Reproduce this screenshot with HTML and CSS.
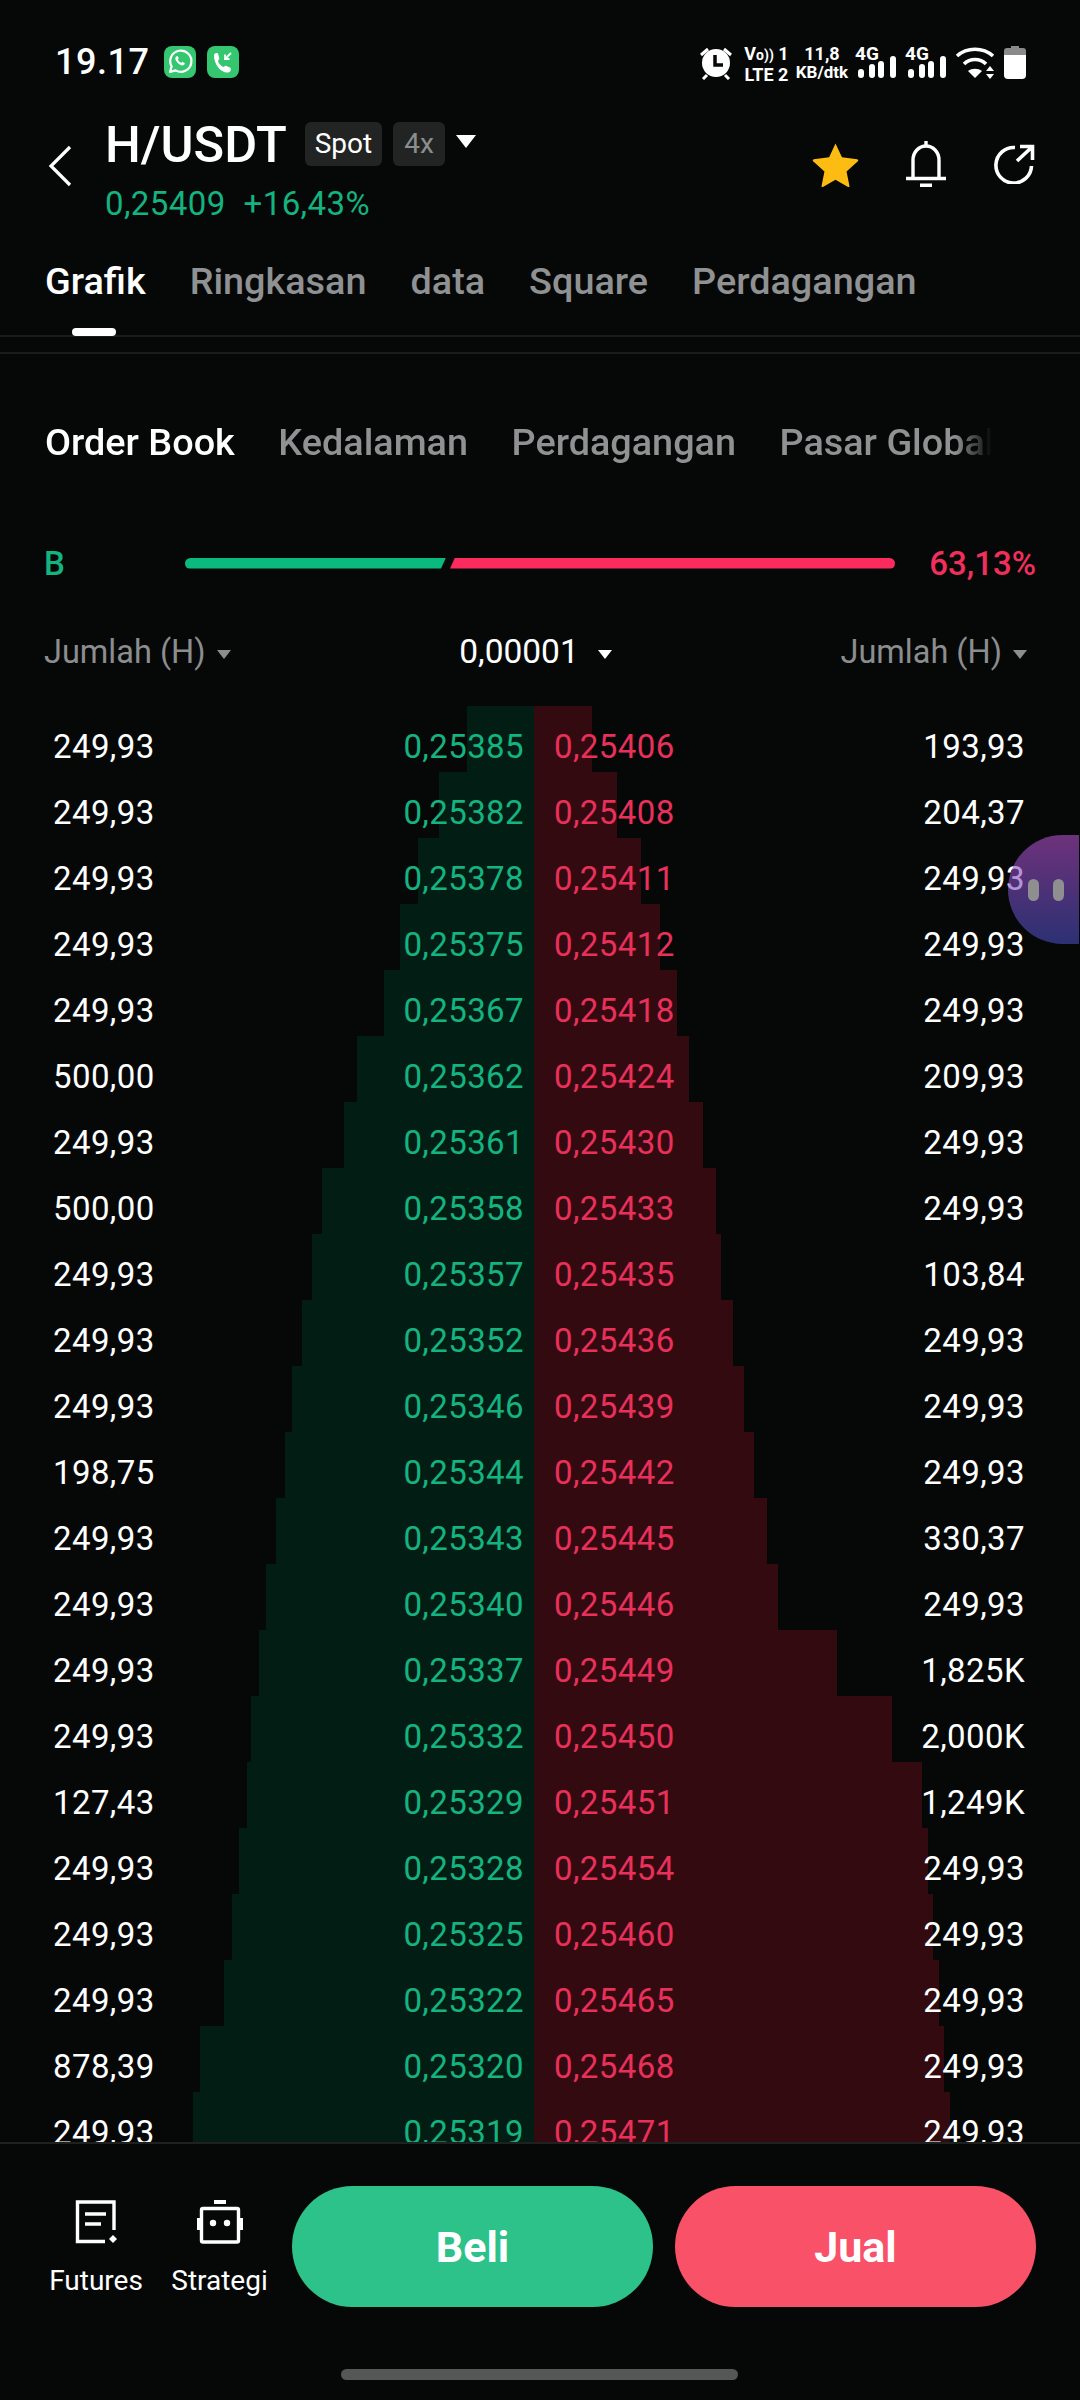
FILE: index.html
```html
<!DOCTYPE html>
<html lang="en">
<head>
  <meta charset="UTF-8">
  <meta name="viewport" content="width=device-width, initial-scale=1.0">
  <title>H/USDT</title>
  <link rel="stylesheet" href="styles.css">
</head>
<body>
  <!-- Status bar -->
  <div class="status-bar">
    <div class="status-left">
      <span class="clock">19.17</span>
      <svg class="app-icon" viewBox="0 0 32 32"><rect width="32" height="32" rx="8" fill="#35c670"/><path d="M6 26l1.6-5.6A10.6 10.6 0 1 1 11.6 24.4z" fill="none" stroke="#fff" stroke-width="2.2" stroke-linejoin="round"/><path d="M12.2 10.4c-1.4 1-1.2 3 .4 5.2s3.6 3.8 5.6 3.8c1.5 0 2.8-1 2.6-2.2l-2.6-1.4-1.2 1.1c-1.3-.6-2.6-1.9-3.2-3.3l1-1.1-1.1-2.5z" fill="#fff"/></svg>
      <svg class="app-icon" viewBox="0 0 32 32"><rect width="32" height="32" rx="8" fill="#35c670"/><path d="M7 9c0-1.500 3-2.500 4-1.500l1.400 5c.2 1-1.400 1.800-1.400 2.600.6 2.600 3 5 5.400 5.800.8 0 1.600-1.400 2.600-1.200l4.400 2c1 1 .4 3.800-1.400 4.600C15 28 6.600 19 7 9z" fill="#fff"/><path d="M24 7l-6 6M18 8.500V13h4.500" fill="none" stroke="#fff" stroke-width="1.800"/></svg>
    </div>
    <div class="status-right">
      <svg class="st-alarm" viewBox="0 0 32 34"><path d="M1 9l7-6M31 9l-7-6M3 33l4-4M29 33l-4-4" stroke="#fff" stroke-width="3" fill="none"/><circle cx="16" cy="17" r="14" fill="#fff"/><path d="M15 9v10h8" stroke="#060808" stroke-width="3.500" fill="none"/></svg>
      <div class="st-two st-vol"><span>V<small>o))</small> 1</span><span>LTE 2</span></div>
      <div class="st-two st-speed"><span>11,8</span><span class="st-unit">KB/dtk</span></div>
      <div class="st-signal"><span class="st-4g">4G</span><svg viewBox="0 0 41 34"><rect x="3" y="23" width="6" height="9" rx="3" fill="#fff"/><rect x="14" y="18" width="6" height="14" rx="3" fill="#fff"/><rect x="23" y="15" width="6" height="17" rx="3" fill="#fff"/><rect x="35" y="10" width="6" height="22" rx="3" fill="#fff"/></svg></div>
      <div class="st-signal"><span class="st-4g">4G</span><svg viewBox="0 0 41 34"><rect x="3" y="23" width="6" height="9" rx="3" fill="#fff"/><rect x="14" y="18" width="6" height="14" rx="3" fill="#fff"/><rect x="23" y="15" width="6" height="17" rx="3" fill="#fff"/><rect x="35" y="10" width="6" height="22" rx="3" fill="#fff"/></svg></div>
      <svg class="st-wifi" viewBox="0 0 40 34"><path d="M2 10C12 1 28 1 38 10" fill="none" stroke="#fff" stroke-width="3.600"/><path d="M9 18C15 12 25 12 31 18" fill="none" stroke="#fff" stroke-width="3.600"/><path d="M13 25c4-3 10-3 14 0l-7 7z" fill="#fff"/><path d="M35 20l4 5h-8zM35 33l-4-5h8z" fill="#fff"/></svg>
      <svg class="st-battery" viewBox="0 0 22 33"><path d="M0 9V5q0-3 3-3h4V0h8v2h4q3 0 3 3v4z" fill="#8a8a8a"/><path d="M0 9h22v20q0 4-4 4H4q-4 0-4-4z" fill="#fff"/></svg>
    </div>
  </div>

  <!-- Pair header -->
  <div class="pair-header">
    <svg class="back-icon" viewBox="0 0 24 42"><path d="M22 2L3 21l19 19" fill="none" stroke="#fff" stroke-width="3.200"/></svg>
    <div class="pair-info">
      <div class="pair-title">
        <span class="pair-name">H/USDT</span>
        <span class="badge">Spot</span>
        <span class="badge badge-dim">4x</span>
        <span class="caret caret-big"></span>
      </div>
      <div class="pair-price"><span>0,25409</span><span>+16,43%</span></div>
    </div>
    <div class="header-actions">
      <svg class="act-star" viewBox="0 0 48 46"><path d="M24 1.500l6.600 14.200 15.600 1.900c1 .2 1.400 1.300.7 2L35.300 30.200l3 15c.1.700-.6 1.300-1.300.9L24 38.500l-13 7.600c-.7.400-1.400-.2-1.300-.9l3-15L1.100 19.600c-.7-.7-.3-1.800.7-2l15.700-1.900z" fill="#fdbc11"/></svg>
      <svg class="act-bell" viewBox="0 0 40 46"><path d="M20 0v5M7 37V19C7 11 13 5 20 5s13 6 13 14v18M0 37.500h40" fill="none" stroke="#fff" stroke-width="3.400"/><rect x="14" y="42.500" width="12" height="3.500" fill="#fff"/></svg>
      <svg class="act-share" viewBox="0 0 42 40"><path d="M22 3.500A17.800 17.800 0 1 0 38.500 22" fill="none" stroke="#fff" stroke-width="3.600"/><path d="M27 2.500h12.500V16M39 3L24 17" fill="none" stroke="#fff" stroke-width="3.600"/></svg>
    </div>
  </div>

  <!-- Main tabs -->
  <div class="main-tabs">
    <span class="tab tab-active">Grafik</span>
    <span class="tab">Ringkasan</span>
    <span class="tab">data</span>
    <span class="tab">Square</span>
    <span class="tab">Perdagangan</span>
  </div>
  <div class="tab-gap"></div>

  <!-- Sub tabs -->
  <div class="sub-tabs">
    <span class="tab tab-active">Order Book</span>
    <span class="tab">Kedalaman</span>
    <span class="tab">Perdagangan</span>
    <span class="tab">Pasar Global</span>
  </div>

  <!-- Buy and sell ratio -->
  <div class="ratio-row">
    <span class="ratio-label">B</span>
    <div class="ratio-bar">
      <div class="ratio-buy"></div>
      <div class="ratio-sell"></div>
    </div>
    <span class="ratio-value">63,13%</span>
  </div>

  <!-- Column heads -->
  <div class="book-head">
    <span class="head-cell">Jumlah (H)<i class="caret"></i></span>
    <span class="head-cell head-mid">0,00001<i class="caret caret-white"></i></span>
    <span class="head-cell">Jumlah (H)<i class="caret"></i></span>
  </div>

  <!-- Order book -->
  <div class="book">
    <div class="row"><div class="bid"><i class="depth" style="width:67px"></i><span>249,93</span><span class="price">0,25385</span></div><div class="ask"><i class="depth" style="width:58px"></i><span class="price">0,25406</span><span>193,93</span></div></div>
    <div class="row"><div class="bid"><i class="depth" style="width:95px"></i><span>249,93</span><span class="price">0,25382</span></div><div class="ask"><i class="depth" style="width:83px"></i><span class="price">0,25408</span><span>204,37</span></div></div>
    <div class="row"><div class="bid"><i class="depth" style="width:116px"></i><span>249,93</span><span class="price">0,25378</span></div><div class="ask"><i class="depth" style="width:107px"></i><span class="price">0,25411</span><span>249,93</span></div></div>
    <div class="row"><div class="bid"><i class="depth" style="width:134px"></i><span>249,93</span><span class="price">0,25375</span></div><div class="ask"><i class="depth" style="width:126px"></i><span class="price">0,25412</span><span>249,93</span></div></div>
    <div class="row"><div class="bid"><i class="depth" style="width:150px"></i><span>249,93</span><span class="price">0,25367</span></div><div class="ask"><i class="depth" style="width:143px"></i><span class="price">0,25418</span><span>249,93</span></div></div>
    <div class="row"><div class="bid"><i class="depth" style="width:177px"></i><span>500,00</span><span class="price">0,25362</span></div><div class="ask"><i class="depth" style="width:155px"></i><span class="price">0,25424</span><span>209,93</span></div></div>
    <div class="row"><div class="bid"><i class="depth" style="width:190px"></i><span>249,93</span><span class="price">0,25361</span></div><div class="ask"><i class="depth" style="width:169px"></i><span class="price">0,25430</span><span>249,93</span></div></div>
    <div class="row"><div class="bid"><i class="depth" style="width:212px"></i><span>500,00</span><span class="price">0,25358</span></div><div class="ask"><i class="depth" style="width:182px"></i><span class="price">0,25433</span><span>249,93</span></div></div>
    <div class="row"><div class="bid"><i class="depth" style="width:222px"></i><span>249,93</span><span class="price">0,25357</span></div><div class="ask"><i class="depth" style="width:187px"></i><span class="price">0,25435</span><span>103,84</span></div></div>
    <div class="row"><div class="bid"><i class="depth" style="width:232px"></i><span>249,93</span><span class="price">0,25352</span></div><div class="ask"><i class="depth" style="width:199px"></i><span class="price">0,25436</span><span>249,93</span></div></div>
    <div class="row"><div class="bid"><i class="depth" style="width:242px"></i><span>249,93</span><span class="price">0,25346</span></div><div class="ask"><i class="depth" style="width:210px"></i><span class="price">0,25439</span><span>249,93</span></div></div>
    <div class="row"><div class="bid"><i class="depth" style="width:249px"></i><span>198,75</span><span class="price">0,25344</span></div><div class="ask"><i class="depth" style="width:220px"></i><span class="price">0,25442</span><span>249,93</span></div></div>
    <div class="row"><div class="bid"><i class="depth" style="width:258px"></i><span>249,93</span><span class="price">0,25343</span></div><div class="ask"><i class="depth" style="width:233px"></i><span class="price">0,25445</span><span>330,37</span></div></div>
    <div class="row"><div class="bid"><i class="depth" style="width:268px"></i><span>249,93</span><span class="price">0,25340</span></div><div class="ask"><i class="depth" style="width:244px"></i><span class="price">0,25446</span><span>249,93</span></div></div>
    <div class="row"><div class="bid"><i class="depth" style="width:275px"></i><span>249,93</span><span class="price">0,25337</span></div><div class="ask"><i class="depth" style="width:303px"></i><span class="price">0,25449</span><span>1,825K</span></div></div>
    <div class="row"><div class="bid"><i class="depth" style="width:283px"></i><span>249,93</span><span class="price">0,25332</span></div><div class="ask"><i class="depth" style="width:358px"></i><span class="price">0,25450</span><span>2,000K</span></div></div>
    <div class="row"><div class="bid"><i class="depth" style="width:287px"></i><span>127,43</span><span class="price">0,25329</span></div><div class="ask"><i class="depth" style="width:388px"></i><span class="price">0,25451</span><span>1,249K</span></div></div>
    <div class="row"><div class="bid"><i class="depth" style="width:295px"></i><span>249,93</span><span class="price">0,25328</span></div><div class="ask"><i class="depth" style="width:394px"></i><span class="price">0,25454</span><span>249,93</span></div></div>
    <div class="row"><div class="bid"><i class="depth" style="width:302px"></i><span>249,93</span><span class="price">0,25325</span></div><div class="ask"><i class="depth" style="width:399px"></i><span class="price">0,25460</span><span>249,93</span></div></div>
    <div class="row"><div class="bid"><i class="depth" style="width:310px"></i><span>249,93</span><span class="price">0,25322</span></div><div class="ask"><i class="depth" style="width:405px"></i><span class="price">0,25465</span><span>249,93</span></div></div>
    <div class="row"><div class="bid"><i class="depth" style="width:334px"></i><span>878,39</span><span class="price">0,25320</span></div><div class="ask"><i class="depth" style="width:410px"></i><span class="price">0,25468</span><span>249,93</span></div></div>
    <div class="row"><div class="bid"><i class="depth" style="width:341px"></i><span>249,93</span><span class="price">0,25319</span></div><div class="ask"><i class="depth" style="width:416px"></i><span class="price">0,25471</span><span>249,93</span></div></div>
  </div>

  <!-- Bottom actions -->
  <div class="bottom-bar">
    <div class="nav-item nav-futures">
      <svg class="nav-icon" viewBox="0 0 46 44"><path d="M32 41.500H4.500V2H41v28M12 14h21M12 24h16" fill="none" stroke="#fff" stroke-width="3.400"/><path d="M40 35l4 4-4 4-4-4z" fill="#fff"/></svg>
      <span>Futures</span>
    </div>
    <div class="nav-item nav-strategy">
      <svg class="nav-icon" viewBox="0 0 46 44"><rect x="17" y="0" width="12" height="4" fill="#fff"/><rect x="4.500" y="8.500" width="37" height="33.500" rx="1.500" fill="none" stroke="#fff" stroke-width="3.400"/><rect x="0" y="18" width="3" height="12" fill="#fff"/><rect x="43" y="18" width="3" height="12" fill="#fff"/><circle cx="16" cy="23" r="3.200" fill="#fff"/><circle cx="30" cy="23" r="3.200" fill="#fff"/></svg>
      <span>Strategi</span>
    </div>
    <div class="action-btn btn-buy">Beli</div>
    <div class="action-btn btn-sell">Jual</div>
  </div>
  <div class="home-bar"></div>

  <!-- Floating assistant bubble -->
  <div class="bubble"><i></i><i></i></div>
</body>
</html>
```

FILE: styles.css
```css
/* Fondo y tipografia */
body {
  position: relative;
  width: 1080px;
  height: 2400px;
  margin: 0;
  overflow: hidden;
  display: flex;
  flex-direction: column;
  background: #060808;
  color: #fff;
  font-family: Roboto, "Noto Sans", sans-serif;
}

/* Barra de estado */
.status-bar {
  height: 92px;
  flex: none;
  display: flex;
  justify-content: space-between;
  align-items: flex-start;
  padding: 46px 54px 0 55px;
  box-sizing: border-box;
}

.status-left {
  display: flex;
  align-items: center;
  gap: 11px;
  height: 32px;
}

.clock {
  font-size: 36px;
  font-weight: 500;
  letter-spacing: 0.5px;
  margin-right: 4px;
}

.app-icon {
  width: 32px;
  height: 32px;
}

.status-right {
  display: flex;
  align-items: flex-start;
  gap: 9px;
}

.st-alarm {
  width: 32px;
  height: 34px;
  margin-right: 2px;
}

.st-two {
  display: flex;
  flex-direction: column;
  align-items: center;
  margin-top: -2px;
  font-size: 18px;
  line-height: 19px;
  font-weight: 700;
  white-space: nowrap;
}

.st-two small {
  font-size: 14px;
}

.st-vol {
  width: 43px;
  margin-left: 2px;
  margin-right: 1px;
}

.st-speed {
  width: 48px;
}

.st-unit {
  font-size: 17px;
}

.st-signal {
  position: relative;
  width: 41px;
  height: 34px;
}

.st-signal svg {
  display: block;
  width: 41px;
  height: 34px;
}

/* El 4G queda encima de las barras */
.st-4g {
  position: absolute;
  left: 0;
  top: 0;
  font-size: 19px;
  line-height: 16px;
  font-weight: 700;
}

.st-wifi {
  width: 40px;
  height: 34px;
}

.st-battery {
  width: 22px;
  height: 33px;
}

/* Cabecera del par */
.pair-header {
  height: 128px;
  flex: none;
  display: flex;
  align-items: flex-start;
  padding: 26px 45px 0 48px;
  box-sizing: border-box;
}

.back-icon {
  width: 24px;
  height: 42px;
  margin: 27px 33px 0 0;
}

.pair-info {
  flex: 1;
}

.pair-title {
  display: flex;
  align-items: center;
  height: 52px;
}

.pair-name {
  font-size: 50.5px;
  font-weight: 500;
  margin-right: 18px;
}

.badge {
  height: 44px;
  line-height: 44px;
  padding: 0 10px;
  border-radius: 6px;
  background: #222424;
  font-size: 28px;
  margin-right: 11px;
}

.badge-dim {
  color: #8c8e8e;
  padding: 0 11px;
}

.caret {
  display: inline-block;
  width: 0;
  height: 0;
  border-left: 7px solid transparent;
  border-right: 7px solid transparent;
  border-top: 9px solid #8c8e8e;
  margin-left: 11px;
  vertical-align: middle;
}

.caret-big {
  border-left-width: 10px;
  border-right-width: 10px;
  border-top: 13px solid #fff;
  margin: -6px 0 0 0;
}

.caret-white {
  border-top-color: #fff;
  margin-left: 19px;
}

.pair-price {
  display: flex;
  gap: 18px;
  margin-top: 15px;
  font-size: 33px;
  letter-spacing: 0.4px;
  line-height: 38px;
  color: #14b380;
}

.header-actions {
  display: flex;
  align-items: center;
  gap: 47px;
  margin-top: 23px;
}

.act-star {
  width: 47px;
  height: 45px;
}

.act-bell {
  width: 40px;
  height: 46px;
}

.act-share {
  width: 42px;
  height: 40px;
}

/* Pestanas */
.main-tabs,
.sub-tabs {
  flex: none;
  display: flex;
  gap: 44px;
  box-sizing: border-box;
  padding-left: 45px;
}

.main-tabs {
  position: relative;
  height: 117px;
  padding-top: 39px;
  border-bottom: 2px solid #1a1c1c;
}

.tab {
  font-size: 37.8px;
  font-weight: 500;
  line-height: 44px;
  color: #8f9192;
  white-space: nowrap;
}

.tab-active {
  color: #fff;
}

/* Indicador de la pestana activa */
.main-tabs .tab-active::after {
  content: "";
  position: absolute;
  left: 72px;
  top: 108px;
  width: 44px;
  height: 8px;
  border-radius: 4px;
  background: #fff;
}

.tab-gap {
  height: 15px;
  flex: none;
  border-bottom: 2px solid #1a1c1c;
}

.sub-tabs {
  height: 179px;
  width: 992px;
  gap: 43.5px;
  padding-top: 66px;
  overflow: hidden;
  -webkit-mask-image: linear-gradient(to right, #000 955px, transparent 992px);
  mask-image: linear-gradient(to right, #000 955px, transparent 992px);
}

/* Barra de compra y venta */
.ratio-row {
  height: 60px;
  flex: none;
  display: flex;
  align-items: center;
  padding: 0 44px 0 44px;
}

.ratio-label {
  width: 141px;
  font-size: 33px;
  font-weight: 500;
  color: #14b380;
}

.ratio-bar {
  width: 710px;
  display: flex;
  gap: 4px;
  height: 11px;
}

.ratio-buy {
  width: 261px;
  background: #0bb97e;
  border-radius: 6px 0 0 6px;
  clip-path: polygon(0 0, 100% 0, calc(100% - 5px) 100%, 0 100%);
}

.ratio-sell {
  flex: 1;
  background: #fb2c5d;
  border-radius: 0 6px 6px 0;
  clip-path: polygon(5px 0, 100% 0, 100% 100%, 0 100%);
}

.ratio-value {
  margin-left: auto;
  font-size: 33px;
  font-weight: 500;
  color: #f22f5c;
}

/* Cabecera de columnas */
.book-head {
  height: 113px;
  flex: none;
  display: flex;
  justify-content: space-between;
  align-items: flex-start;
  padding: 39px 53px 0 44px;
  box-sizing: border-box;
}

.head-cell {
  font-size: 32.5px;
  line-height: 40px;
  color: #8b8d8e;
  white-space: nowrap;
}

.head-mid {
  font-size: 33.5px;
  color: #fff;
}

/* Libro de ordenes */
.book {
  flex: 1;
  min-height: 0;
  overflow: hidden;
}

.row {
  display: flex;
  height: 66px;
  font-size: 33px;
  letter-spacing: 0.4px;
}

.bid,
.ask {
  position: relative;
  display: flex;
  justify-content: space-between;
  align-items: center;
  box-sizing: border-box;
  padding-top: 15px;
}

.bid {
  width: 534px;
  padding-left: 53px;
  padding-right: 10px;
}

.ask {
  flex: 1;
  padding-left: 20px;
  padding-right: 55px;
}

.bid span,
.ask span {
  position: relative;
}

.depth {
  position: absolute;
  top: 0;
  bottom: 0;
}

.bid .depth {
  right: 0;
  background: #021e14;
}

.ask .depth {
  left: 0;
  background: #340a11;
}

.bid .price {
  color: #14b380;
}

.ask .price {
  color: #e9305a;
}

/* Barra inferior */
.bottom-bar {
  height: 226px;
  flex: none;
  display: flex;
  align-items: flex-start;
  box-sizing: border-box;
  padding: 42px 44px 0 0;
  border-top: 2px solid #1f2121;
}

.nav-item {
  display: flex;
  flex-direction: column;
  align-items: center;
  font-size: 28px;
  line-height: 34px;
  margin-top: 14px;
}

.nav-futures {
  width: 144px;
  margin-left: 24px;
}

.nav-strategy {
  width: 123px;
  margin-left: -10px;
}

.nav-icon {
  width: 46px;
  height: 44px;
  margin-bottom: 20px;
}

.action-btn {
  height: 121px;
  line-height: 123px;
  width: 361px;
  border-radius: 61px;
  text-align: center;
  font-size: 43px;
  font-weight: 700;
}

.btn-buy {
  background: #2ec28b;
  margin-left: 11px;
}

.btn-sell {
  background: #f95268;
  margin-left: 22px;
}

.home-bar {
  height: 11px;
  width: 397px;
  flex: none;
  margin: 1px 0 20px 341px;
  border-radius: 6px;
  background: #555656;
}

/* Burbuja flotante */
.bubble {
  position: absolute;
  left: 1008px;
  top: 835px;
  width: 71px;
  height: 109px;
  border-radius: 55px 0 0 55px;
  display: flex;
  align-items: center;
  gap: 14px;
  padding-left: 20px;
  box-sizing: border-box;
  background: linear-gradient(rgba(178, 78, 200, 0.6), rgba(70, 75, 187, 0.6));
}

.bubble i {
  width: 11px;
  height: 22px;
  border-radius: 6px;
  background: #8f8f90;
}
```
